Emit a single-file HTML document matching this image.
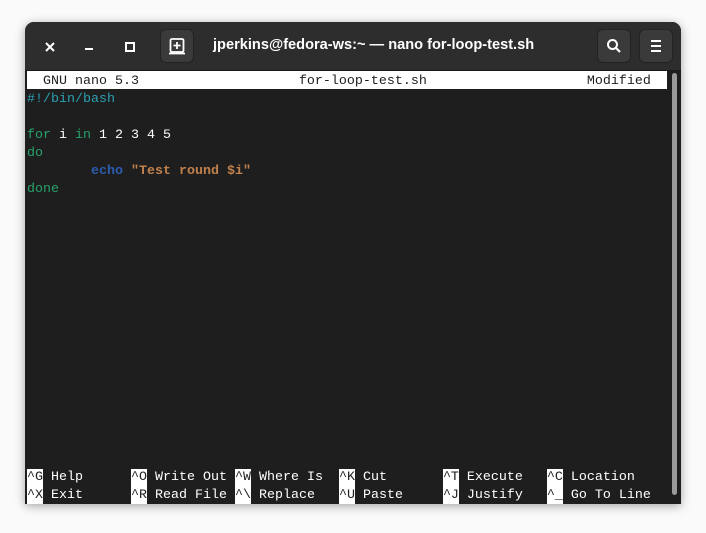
<!DOCTYPE html>
<html><head><style>
body{margin:0;width:706px;height:533px;background:#fafafa;position:relative;overflow:hidden;font-family:"Liberation Sans",sans-serif}
.win{position:absolute;left:25px;top:22px;width:656px;height:482px;background:#1e1e1e;border-radius:9px 9px 0 0;box-shadow:0 2px 10px rgba(0,0,0,.35);overflow:hidden}
.hdr{position:absolute;left:0;top:0;width:656px;height:48px;background:#2d2d2d;border-bottom:1px solid #1a1a1a}
.btn{position:absolute;top:7px;width:34px;height:34px;background:#3a3a3a;border-radius:6px;border:1px solid #222;box-sizing:border-box}
.title{position:absolute;left:188px;top:15px;color:#fff;font-weight:bold;font-size:14.6px;white-space:nowrap}
.term{position:absolute;left:2px;font-family:"Liberation Mono",monospace;font-size:13.33px;line-height:18px;color:#fff;white-space:pre}
.inv{background:#fff;color:#1e1e1e}
.k{display:inline-block;height:18px;vertical-align:top}
.sb{position:absolute;left:647px;top:51px;width:5px;height:422px;background:#9a9a9a;border-radius:3px}
</style></head><body>
<div class="win">
<div class="hdr">
<svg width="12" height="12" viewBox="0 0 12 12" style="position:absolute;left:19px;top:19px"><path d="M2 2l8 8M10 2l-8 8" stroke="#fff" stroke-width="2"/></svg>
<div style="position:absolute;left:60px;top:26px;width:8px;height:2px;background:#fff"></div>
<div style="position:absolute;left:100px;top:20px;width:6px;height:6px;border:2px solid #fff"></div>
<div class="btn" style="left:135px"><svg width="32" height="32" viewBox="0 0 32 32" style="position:absolute;left:0;top:0"><rect x="9.5" y="9" width="13" height="13" rx="1.5" fill="none" stroke="#fff" stroke-width="1.8"/><path d="M16 12v7M12.5 15.5h7M8 23.5h16" stroke="#fff" stroke-width="1.8"/></svg></div>
<div class="title">jperkins@fedora-ws:~ — nano for-loop-test.sh</div>
<div class="btn" style="left:572px"><svg width="32" height="32" viewBox="0 0 32 32" style="position:absolute;left:0;top:0"><circle cx="14.5" cy="14.5" r="4.5" fill="none" stroke="#fff" stroke-width="2"/><path d="M18 18l4 4" stroke="#fff" stroke-width="2.2"/></svg></div>
<div class="btn" style="left:614px"><svg width="32" height="32" viewBox="0 0 32 32" style="position:absolute;left:0;top:0"><path d="M11 11h10M11 16h10M11 21h10" stroke="#fff" stroke-width="2"/></svg></div>
</div>
<div class="term inv" style="top:49px;padding-top:2px;height:16px;width:640px;overflow:visible">  GNU nano 5.3                    for-loop-test.sh                    Modified  </div>
<div class="term" style="top:69px"><span style="color:#2aa1b3">#!/bin/bash</span>

<span style="color:#26a269">for</span> i <span style="color:#26a269">in</span> 1 2 3 4 5
<span style="color:#26a269">do</span>
        <b style="color:#2a5db0">echo</b> <b style="color:#c0804c">"Test round $i"</b>
<span style="color:#26a269">done</span></div>
<div class="term" style="top:447px"><span class="inv k">^G</span> Help      <span class="inv k">^O</span> Write Out <span class="inv k">^W</span> Where Is  <span class="inv k">^K</span> Cut       <span class="inv k">^T</span> Execute   <span class="inv k">^C</span> Location
<span class="inv k">^X</span> Exit      <span class="inv k">^R</span> Read File <span class="inv k">^\</span> Replace   <span class="inv k">^U</span> Paste     <span class="inv k">^J</span> Justify   <span class="inv k">^_</span> Go To Line</div>
<div class="sb"></div>
</div>
</body></html>
